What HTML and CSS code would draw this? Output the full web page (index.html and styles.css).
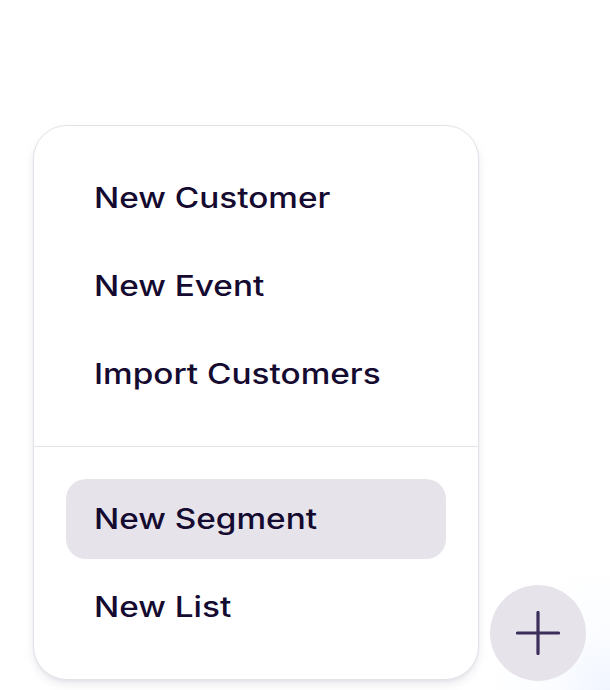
FILE: index.html
```html
<!DOCTYPE html>
<html lang="en">
<head>
<meta charset="utf-8">
<title>Create menu</title>
<link rel="stylesheet" href="styles.css">
</head>
<body>
<div class="stage">
  <div class="menu">
    <ul class="section">
      <li class="item"><span class="label">New Customer</span></li>
      <li class="item"><span class="label">New Event</span></li>
      <li class="item"><span class="label">Import Customers</span></li>
    </ul>
    <ul class="section">
      <li class="item active"><span class="label">New Segment</span></li>
      <li class="item"><span class="label">New List</span></li>
    </ul>
  </div>
  <button class="fab" aria-label="Create">
    <svg width="44" height="44" viewBox="0 0 44 44" fill="none" stroke="currentColor" stroke-width="3.2" stroke-linecap="round">
      <path d="M22 1.5v41M1.5 22h41"/>
    </svg>
  </button>
</div>
</body>
</html>
```

FILE: styles.css
```css
html, body {
  margin: 0;
  padding: 0;
}
body {
  width: 610px;
  height: 690px;
  overflow: hidden;
  background:
    radial-gradient(circle at 100% 100%, rgba(222, 232, 255, 0.45) 0, rgba(235, 242, 255, 0.2) 60px, rgba(255, 255, 255, 0) 130px),
    #ffffff;
  font-family: Inter, "Noto Sans", "Liberation Sans", sans-serif;
  color: #150a30;
}
.stage {
  display: flex;
  align-items: flex-end;
  gap: 11px;
  padding: 125px 0 0 33px;
}
.menu {
  width: 444px;
  background: #ffffff;
  border: 1px solid #e4e2e9;
  border-radius: 34px;
  box-shadow: 0 5px 10px rgba(40, 30, 80, 0.08), 0 2px 3px rgba(40, 30, 80, 0.05);
  overflow: hidden;
}
.section {
  list-style: none;
  margin: 0;
  padding: 32px;
  display: flex;
  flex-direction: column;
  gap: 8px;
}
.section + .section {
  border-top: 1px solid #e4e2e9;
}
.item {
  height: 80px;
  display: flex;
  align-items: center;
  padding: 0 28px;
  border-radius: 20px;
  font-size: 28px;
  font-weight: 500;
}
.label {
  display: inline-block;
  white-space: nowrap;
  transform: scaleX(1.19);
  transform-origin: left center;
}
.item.active {
  background: #e6e4ea;
}
.fab {
  width: 96px;
  height: 96px;
  margin-bottom: -1px;
  border: none;
  border-radius: 50%;
  background: #e6e4ea;
  color: #3b2e5a;
  display: flex;
  align-items: center;
  justify-content: center;
  padding: 0;
}
```
